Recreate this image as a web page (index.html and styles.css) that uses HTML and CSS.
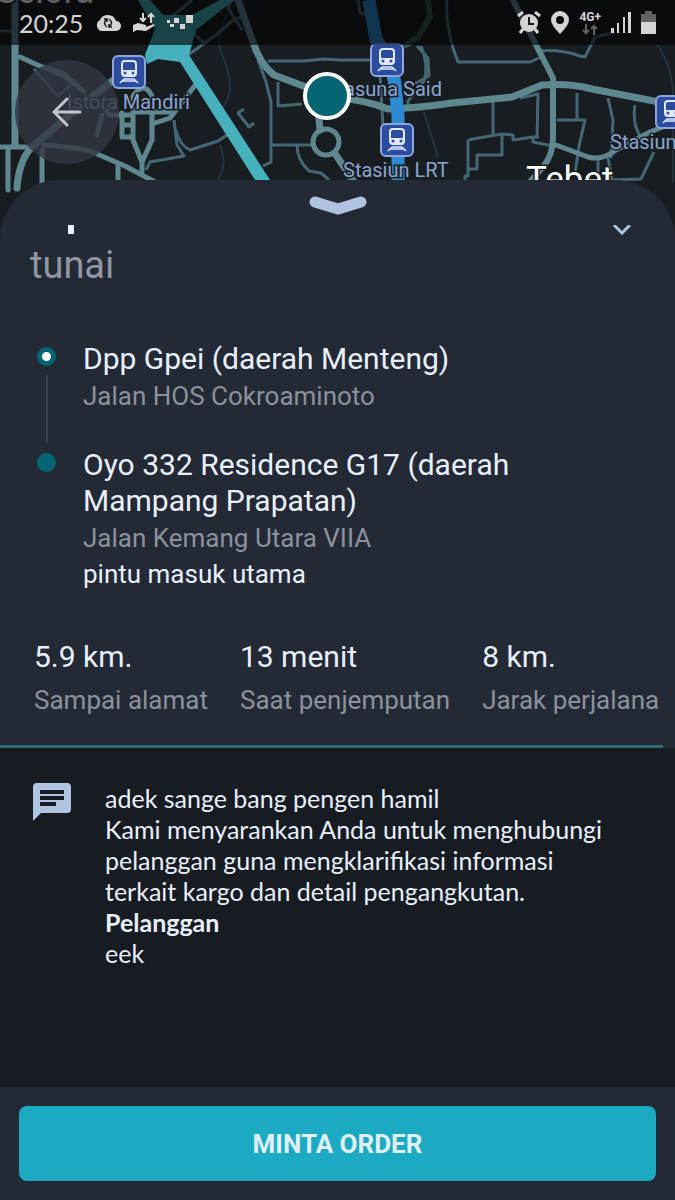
FILE: index.html
```html
<!DOCTYPE html>
<html lang="id">
<head>
    <meta charset="UTF-8">
    <meta name="viewport" content="width=device-width, initial-scale=1.0">
    <title>Detail Order</title>
    <link rel="stylesheet" href="styles.css">
</head>
<body>
    <header class="top">
        <!-- Peta -->
        <svg class="map" viewBox="0 0 675 240" preserveAspectRatio="xMidYMin slice" role="img" aria-label="Peta">
            <defs>
                <g id="station">
                    <rect x="1" y="1" width="32" height="32" rx="5" fill="#2b4c9f" stroke="#8ea5dc" stroke-width="2"/>
                    <rect x="10" y="6" width="14" height="15" rx="3" fill="#2b4c9f" stroke="#dfeaff" stroke-width="2"/>
                    <path d="M10 15h14v4q0 2-2 2H12q-2 0-2-2z" fill="#dfeaff"/>
                    <circle cx="13" cy="18" r="1.5" fill="#2b4c9f"/>
                    <circle cx="21" cy="18" r="1.5" fill="#2b4c9f"/>
                    <path d="M12 24h10M12 24l-4 4M22 24l4 4M10 26h14" fill="none" stroke="#dfeaff" stroke-width="1.5"/>
                </g>
            </defs>
            <rect width="675" height="240" fill="#181d21"/>
            <path d="M424 112l14 45" fill="none" stroke="#23383f" stroke-width="2"/>
            <path d="M230 10q-14 20-10 40 10 20 10 40-2 12-8 18M220 145q8 18-2 35M655 42q16 20 18 50v90" fill="none" stroke="#22343d" stroke-width="2"/>
            <!-- jalan kecil -->
            <g fill="none" stroke="#456775" stroke-width="3" stroke-linejoin="round">
                <path d="M0 31h15M34 69l24 27 14-12M40 66l25 12 8 8M170 18L192 0M192 32l12 11M188 55l28-20 16-14 12-5M232 0l-4 8 14 22"/>
                <path d="M268 61h36l20-2 15 1h36l5-4M258 60l8 22 5 20v60l-8 4M271 145h40M297 145q0 15 12 26l12 2 8 7M278 82v24l24-2"/>
                <path d="M146 170l4-8 34-6-7-11-3-25M176 130q4 16 14 20l28-9 12-8M244 109l-6 4 11 14 5-4"/>
                <path d="M358 0l2 13 14 4M447 0q-2 30 11 62h72l9-4M540 51q20-2 40 5l5 1 10-20 20-5"/>
                <path d="M421 46q8 20 3 35l-16 20v6M380 75l3 52M417 46l11 12 1 18-15 8"/>
                <path d="M493 102v33M520 98l18-4-1 43M577 93v27M557 120h28l-6 26-4 28M608 98l5 22-2 38M635 105q-3 20 6 32M468 140l33-6 12 1v5l20-3h6M533 137v5l20 4M468 140v29h9v-14h25v-20M468 169v7h-3v5M654 152l-13 27-30 1M598 160v20M608 158l4 22"/>
            </g>
            <!-- jalan utama -->
            <g fill="none" stroke="#5f8790" stroke-linejoin="round" stroke-linecap="round">
                <path d="M15 0v145M17 188q2-28 15-41L66 118l50-40" stroke-width="7"/>
                <path d="M0 147h32M8 147v43M20 57l22 10 22 7 20 18M42 150v50M44 145q30 2 46 6l35 15 30 16M118 163v20M97 135l5-20M92 95l18 20h20" stroke-width="5"/>
                <path d="M133 96v44l9 22 10-22V96q-8-16-19 0M142 158v14M122 113v24h10M122 125h10M152 124l18-6 26-34M135 112h36" stroke-width="5"/>
                <path d="M238 0l15 42q7 22 21 33l32 12M318 108l2 22M336 155l20 30" stroke-width="7"/>
                <circle cx="326" cy="142" r="13" stroke-width="5"/>
                <path d="M340 98q25 2 48 11 30-1 64-6l60-6 30-12q28-2 50 4l83 16" stroke-width="7"/>
                <path d="M513 0l40 78v60q0 17-10 29l-15 17" stroke-width="6"/>
                <path d="M556 145l32 12q14 4 28-7l34-18 15-6" stroke-width="5"/>
                <path d="M428 0l2 17-12 20-12 8" stroke="#355354" stroke-width="6"/>
            </g>
            <path d="M138 0h12l13 15h29l28-15h14l-38 30-7 25 83 128h-15L180 62l-22-3-11 5-2-9 10-26z" fill="#46b0bd"/>
            <path d="M369 0l7 40q16 20 19 45l3 30v75" fill="none" stroke="#2e8ad0" stroke-width="13"/>
            <g class="place">
                <text class="place-big" x="-4" y="3">Selora</text>
                <text x="67" y="109">Istora Mandiri</text>
                <text x="344" y="96">asuna Said</text>
                <text x="343" y="177">Stasiun LRT</text>
                <text x="610" y="149">Stasiun</text>
                <text class="place-big" x="526" y="191">Tebet</text>
            </g>
            <use href="#station" x="112" y="55"/>
            <use href="#station" x="370" y="43"/>
            <use href="#station" x="380" y="123"/>
            <use href="#station" x="655" y="95"/>
            <circle cx="327" cy="96" r="22" fill="#056572" stroke="#fff" stroke-width="4"/>
        </svg>

        <!-- Status bar -->
        <div class="status">
            <div class="status-group">
                <span class="clock">20:25</span>
                <svg width="26" height="18" viewBox="0 0 26 18">
                    <path d="M6 17a6 6 0 0 1-1-11Q7 1 13 1t8 6a5 5 0 0 1 0 10z" fill="#d4d4d4"/>
                    <path d="M12 13q-5-4 0-8M9 5h3v3M14 5q5 4 0 8M17 13h-3v-3" fill="none" stroke="#17191a" stroke-width="1.5"/>
                </svg>
                <svg width="22" height="21" viewBox="0 0 22 21">
                    <path d="M10 1v8M7 6l3 3 3-3M18 11V2M15 5l3-3 3 3" fill="none" stroke="#d4d4d4" stroke-width="2"/>
                    <path d="M0 13l5-2 8 2q1 2-2 2H8h5l8-3q1 1 0 2l-8 5-9-1-4 2z" fill="#d4d4d4"/>
                </svg>
                <svg width="26" height="15" viewBox="0 0 26 15">
                    <path d="M0 5h3v3H0zM3 9h4v3H3zM7 3h5v5H7zM13 9h5v5h-5zM19 0h7v8h-7z" fill="#d4d4d4"/>
                </svg>
            </div>
            <div class="status-group status-right">
                <svg width="24" height="23" viewBox="0 0 24 23">
                    <circle cx="12" cy="12" r="9" fill="#d4d4d4"/>
                    <path d="M1 5l5-4M23 5l-5-4M6 18l-3 4M18 18l3 4" stroke="#d4d4d4" stroke-width="3"/>
                    <path d="M12 6v7h5" fill="none" stroke="#17191a" stroke-width="2"/>
                </svg>
                <svg width="18" height="23" viewBox="0 0 18 23">
                    <path fill-rule="evenodd" d="M9 0a9 9 0 0 1 9 9q0 5-9 14Q0 14 0 9a9 9 0 0 1 9-9zm0 5a4 4 0 1 0 0 8 4 4 0 0 0 0-8z" fill="#d4d4d4"/>
                </svg>
                <div class="network">
                    <span>4G+</span>
                    <svg width="16" height="11" viewBox="0 0 16 11">
                        <path d="M4 0v9M1 6l3 3 3-3M12 11V2M9 5l3-3 3 3" fill="none" stroke="#606364" stroke-width="2"/>
                    </svg>
                </div>
                <svg width="20" height="21" viewBox="0 0 20 21">
                    <path d="M0 16h3v5H0zM6 11h2v10H6zM12 5h2v16h-2zM17 0h3v21h-3z" fill="#d4d4d4"/>
                </svg>
                <svg width="15" height="23" viewBox="0 0 15 23">
                    <path d="M4 0h7v3h4v8H0V3h4z" fill="#606364"/>
                    <path d="M0 11h15v12H0z" fill="#d4d4d4"/>
                </svg>
            </div>
        </div>

        <button class="back" type="button" aria-label="Kembali">
            <svg width="30" height="30" viewBox="0 0 30 30">
                <path d="M15 2L2 15l13 13M2 15h26" fill="none" stroke="#c3c5c9" stroke-width="3" stroke-linecap="round"/>
            </svg>
        </button>
    </header>

    <main class="sheet">
        <button class="handle" type="button" aria-label="Tutup">
            <svg width="58" height="20" viewBox="0 0 58 20">
                <path d="M6 6l23 7 23-7" fill="none" stroke="#b0c4e2" stroke-width="11" stroke-linecap="round" stroke-linejoin="miter"/>
            </svg>
        </button>

        <!-- Sisa baris yang tergulir -->
        <div class="scrolled">
            <svg width="6" height="9" viewBox="0 0 6 9"><path d="M0 0h6v9H0z" fill="#e9f0fd"/></svg>
            <svg width="20" height="10" viewBox="0 0 20 10"><path d="M2 0l8 8 8-8" fill="none" stroke="#b0c4e2" stroke-width="3"/></svg>
        </div>
        <p class="payment">tunai</p>

        <ol class="route">
            <li class="stop">
                <span class="dot dot-start"></span>
                <h2>Dpp Gpei (daerah Menteng)</h2>
                <p class="street">Jalan HOS Cokroaminoto</p>
            </li>
            <li class="stop">
                <span class="dot"></span>
                <h2>Oyo 332 Residence G17 (daerah Mampang Prapatan)</h2>
                <p class="street">Jalan Kemang Utara VIIA</p>
                <p class="entrance">pintu masuk utama</p>
            </li>
        </ol>

        <dl class="stats">
            <div>
                <dd>5.9 km.</dd>
                <dt>Sampai alamat</dt>
            </div>
            <div>
                <dd>13 menit</dd>
                <dt>Saat penjemputan</dt>
            </div>
            <div>
                <dd>8 km.</dd>
                <dt>Jarak perjalana</dt>
            </div>
        </dl>
        <div class="progress"></div>
    </main>

    <!-- Catatan pelanggan -->
    <section class="note">
        <svg class="note-icon" width="38" height="38" viewBox="0 0 38 38">
            <path d="M4 0h30q4 0 4 4v22q0 4-4 4H8l-8 8V4q0-4 4-4z" fill="#b0c4e2"/>
            <path d="M7 9h24M7 15h24M7 21h16" stroke="#171c23" stroke-width="4"/>
        </svg>
        <p>
            adek sange bang pengen hamil<br>
            Kami menyarankan Anda untuk menghubungi<br>
            pelanggan guna mengklarifikasi informasi<br>
            terkait kargo dan detail pengangkutan.<br>
            <strong>Pelanggan</strong><br>
            eek
        </p>
    </section>

    <footer class="actions">
        <button class="order" type="button">MINTA ORDER</button>
    </footer>
</body>
</html>
```
FILE: styles.css
```css
* {
    box-sizing: border-box;
}
body {
    font-family: Roboto, "Liberation Sans", sans-serif;
    background-color: #171c23;
    color: #e9f0fd;
    margin: 0;
    min-height: 100vh;
    display: flex;
    flex-direction: column;
}
h2, p, ol, dl, dd {
    margin: 0;
    padding: 0;
}
button {
    border: none;
    padding: 0;
    cursor: pointer;
    font-family: inherit;
}
svg {
    display: block;
    flex-shrink: 0;
}

/* peta + status bar */
.top {
    position: relative;
    height: 240px;
    overflow: hidden;
}
.map {
    position: absolute;
    top: 0;
    left: 0;
    width: 100%;
    height: 240px;
}
.place text {
    font-size: 20px;
    fill: #8aa4d0;
    stroke: #181d21;
    stroke-width: 3px;
    paint-order: stroke;
}
.place .place-big {
    font-size: 35px;
    fill: #fff;
}
.status {
    position: relative;
    display: flex;
    justify-content: space-between;
    align-items: center;
    height: 45px;
    padding: 0 19px;
    background-color: rgba(0, 0, 0, 0.62);
    color: #d4d4d4;
}
.status-group {
    display: flex;
    align-items: center;
    gap: 12px;
}
.status-right {
    gap: 10px;
}
.clock {
    font-family: Lato, sans-serif;
    font-size: 25px;
}
.network {
    display: flex;
    flex-direction: column;
    align-items: center;
    font-size: 12px;
    line-height: 13px;
    font-weight: bold;
}
.back {
    position: relative;
    display: flex;
    align-items: center;
    justify-content: center;
    width: 104px;
    height: 104px;
    margin: 15px 0 0 15px;
    border-radius: 50%;
    background-color: rgba(50, 55, 68, 0.8);
}

/* panel detail */
.sheet {
    position: relative;
    margin-top: -60px;
    background-color: #232a36;
    border-radius: 60px 60px 0 0;
}
.handle {
    display: block;
    margin: 0 auto;
    padding-top: 16px;
    background: none;
}
.scrolled {
    display: flex;
    justify-content: space-between;
    padding: 9px 43px 0 68px;
}
.payment {
    padding: 8px 30px 0;
    font-size: 38px;
    line-height: 44px;
    color: #9096a2;
}
.route {
    list-style: none;
    padding: 54px 83px 0;
}
.stop {
    position: relative;
    padding-bottom: 32px;
}
.stop h2 {
    font-size: 30px;
    line-height: 36px;
    font-weight: normal;
}
.street {
    font-size: 26px;
    line-height: 38px;
    color: #8b919d;
}
.entrance {
    font-size: 26px;
    line-height: 34px;
}
.stop:first-child::after {
    content: "";
    position: absolute;
    left: -37px;
    top: 34px;
    bottom: 4px;
    width: 2px;
    background-color: #3a414d;
}
.dot {
    position: absolute;
    left: -46px;
    top: 6px;
    width: 19px;
    height: 19px;
    border-radius: 50%;
    background-color: #056572;
}
.dot-start {
    background-color: #fff;
    border: 5px solid #056572;
}
.stats {
    display: flex;
    gap: 32px;
    padding: 16px 0 20px 34px;
    overflow: hidden;
    white-space: nowrap;
}
.stats div {
    display: flex;
    flex-direction: column;
}
.stats dd {
    font-size: 30px;
    line-height: 36px;
}
.stats dt {
    font-size: 26px;
    line-height: 50px;
    color: #8b919d;
}
.progress {
    margin-right: 12px;
    height: 3px;
    background-color: #2b6c77;
}

/* catatan */
.note {
    flex: 1;
    display: flex;
    gap: 34px;
    padding: 35px 33px;
}
.note p {
    font-family: Lato, "Noto Sans", sans-serif;
    font-size: 25px;
    line-height: 31px;
}

/* tombol bawah */
.actions {
    padding: 19px;
    background-color: #232a36;
}
.order {
    width: 100%;
    height: 75px;
    border-radius: 8px;
    background-color: #1baac1;
    color: #e0f0fb;
    font-size: 26px;
    font-weight: bold;
}
```
